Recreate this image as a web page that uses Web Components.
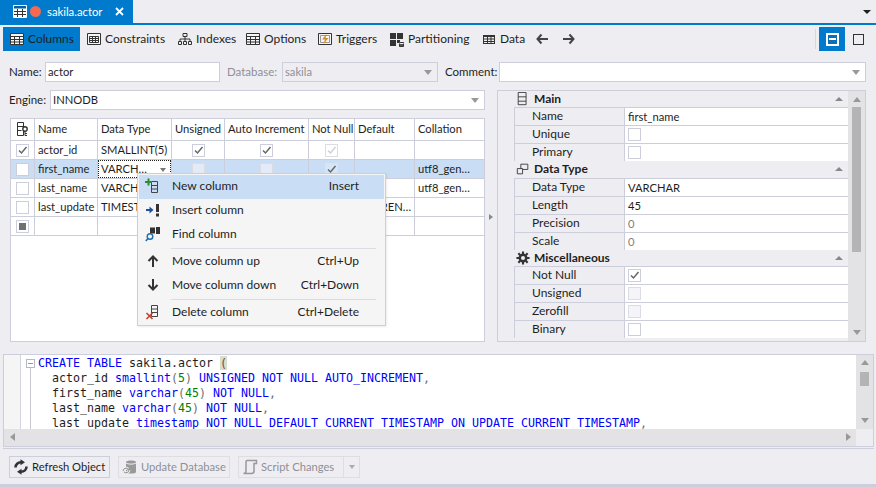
<!DOCTYPE html>
<html>
<head>
<meta charset="utf-8">
<title>sakila.actor</title>
<style>
    html, body { margin: 0; padding: 0; height: 100%; overflow: hidden; }
    body {
        box-sizing: border-box;
        border-bottom: 3px solid #cccedb;
        background: #eeeef2;
        color: #1e1e1e;
        font: 12px/16px Lato, "Noto Sans", "Liberation Sans", sans-serif;
    }
    .designer {
        display: grid;
        grid-template-columns: 476px 12px 369px;
        grid-template-rows: 20px 252px;
        row-gap: 8px;
        padding: 10px 0 0 9px;
    }
    .top-fields { grid-column: 1 / 4; display: flex; gap: 7px; }
    .left-col { display: flex; flex-direction: column; gap: 8px; }
    .splitter { display: flex; align-items: center; justify-content: center; padding-top: 2px; }
    .splitter i { border-left: 4px solid #888; border-top: 3px solid transparent; border-bottom: 3px solid transparent; }
    .num { color: #808080; }
</style>
</head>
<body>
<doc-tabs title="sakila.actor"></doc-tabs>
<tool-bar>
    <tool-button icon="table" width="77" active>Columns</tool-button>
    <tool-button icon="constraints" width="91">Constraints</tool-button>
    <tool-button icon="indexes" width="68">Indexes</tool-button>
    <tool-button icon="table" width="72">Options</tool-button>
    <tool-button icon="triggers" width="72">Triggers</tool-button>
    <tool-button icon="partitions" width="92">Partitioning</tool-button>
    <tool-button icon="smalltable" width="53">Data</tool-button>
    <tool-button icon="left" width="27"></tool-button>
    <tool-button icon="right" width="27"></tool-button>
</tool-bar>

<div class="designer">
    <div class="top-fields">
        <form-field label="Name:" label-width="36" width="175">actor</form-field>
        <form-field label="Database:" label-width="55" width="156" arrow disabled>sakila</form-field>
        <form-field label="Comment:" label-width="54" width="367" arrow></form-field>
    </div>
    <div class="left-col">
        <form-field label="Engine:" label-width="41" width="435" arrow>INNODB</form-field>
        <column-grid>
            <grid-row kind="head">
                <grid-cell><svg-icon name="keycol"></svg-icon></grid-cell>
                <grid-cell>Name</grid-cell><grid-cell>Data Type</grid-cell><grid-cell>Unsigned</grid-cell>
                <grid-cell>Auto Increment</grid-cell><grid-cell>Not Null</grid-cell><grid-cell>Default</grid-cell><grid-cell>Collation</grid-cell>
            </grid-row>
            <grid-row>
                <grid-cell center><check-box checked gray></check-box></grid-cell>
                <grid-cell>actor_id</grid-cell><grid-cell>SMALLINT(5)</grid-cell>
                <grid-cell center><check-box checked></check-box></grid-cell>
                <grid-cell center><check-box checked></check-box></grid-cell>
                <grid-cell center><check-box checked faded></check-box></grid-cell>
                <grid-cell></grid-cell><grid-cell></grid-cell>
            </grid-row>
            <grid-row selected>
                <grid-cell center><check-box white></check-box></grid-cell>
                <grid-cell>first_name</grid-cell>
                <grid-cell editor>VARCH…</grid-cell>
                <grid-cell center><check-box faded></check-box></grid-cell>
                <grid-cell center><check-box faded></check-box></grid-cell>
                <grid-cell center><check-box checked plain></check-box></grid-cell>
                <grid-cell></grid-cell><grid-cell>utf8_gen…</grid-cell>
            </grid-row>
            <grid-row>
                <grid-cell center><check-box></check-box></grid-cell>
                <grid-cell>last_name</grid-cell><grid-cell>VARCHAR(45)</grid-cell>
                <grid-cell></grid-cell><grid-cell></grid-cell><grid-cell></grid-cell>
                <grid-cell></grid-cell><grid-cell>utf8_gen…</grid-cell>
            </grid-row>
            <grid-row>
                <grid-cell center><check-box></check-box></grid-cell>
                <grid-cell>last_update</grid-cell><grid-cell>TIMESTAMP</grid-cell>
                <grid-cell></grid-cell><grid-cell></grid-cell><grid-cell></grid-cell>
                <grid-cell>CURREN…</grid-cell><grid-cell></grid-cell>
            </grid-row>
            <grid-row>
                <grid-cell center><check-box stop></check-box></grid-cell>
                <grid-cell></grid-cell><grid-cell></grid-cell><grid-cell></grid-cell><grid-cell></grid-cell>
                <grid-cell></grid-cell><grid-cell></grid-cell><grid-cell></grid-cell>
            </grid-row>
            <context-menu slot="overlay">
                <menu-item icon="newcol" shortcut="Insert" active>New column</menu-item>
                <menu-item icon="insertcol">Insert column</menu-item>
                <menu-item icon="findcol">Find column</menu-item>
                <menu-sep></menu-sep>
                <menu-item icon="up" shortcut="Ctrl+Up">Move column up</menu-item>
                <menu-item icon="down" shortcut="Ctrl+Down">Move column down</menu-item>
                <menu-sep></menu-sep>
                <menu-item icon="delcol" shortcut="Ctrl+Delete">Delete column</menu-item>
            </context-menu>
        </column-grid>
    </div>
    <div class="splitter"><i></i></div>
    <prop-grid>
        <prop-category icon="main" height="16">Main</prop-category>
        <prop-row label="Name">first_name</prop-row>
        <prop-row label="Unique"><check-box></check-box></prop-row>
        <prop-row label="Primary"><check-box></check-box></prop-row>
        <prop-category icon="datatype" height="17" nudge>Data Type</prop-category>
        <prop-row label="Data Type">VARCHAR</prop-row>
        <prop-row label="Length">45</prop-row>
        <prop-row label="Precision"><span class="num">0</span></prop-row>
        <prop-row label="Scale"><span class="num">0</span></prop-row>
        <prop-category icon="gear" height="16">Miscellaneous</prop-category>
        <prop-row label="Not Null"><check-box checked></check-box></prop-row>
        <prop-row label="Unsigned"><check-box faded></check-box></prop-row>
        <prop-row label="Zerofill"><check-box faded></check-box></prop-row>
        <prop-row label="Binary"><check-box></check-box></prop-row>
    </prop-grid>
</div>

<sql-panel></sql-panel>

<action-bar>
    <action-button icon="refresh" width="101">Refresh Object</action-button>
    <action-button icon="updatedb" width="112" disabled>Update Database</action-button>
    <action-button icon="script" width="106" disabled split>Script Changes</action-button>
</action-bar>

<script>
// all icons live here, drawn on a 16x16 box
const ICONS = {
    table: '<path d="M1.5 2.5h13v11h-13z" fill="#f6f6f6" stroke="#333"/><path d="M1.5 5.5h13M1.5 8.500h13M1.5 11h13M5.5 5.5v8M10.5 5.5v8" stroke="#333" fill="none"/>',
    constraints: '<path d="M1.5 2.5h13v11h-13z" fill="#f6f6f6" stroke="#333"/><path d="M3.5 5.5h9v6h-9z" fill="none" stroke="#333"/><path d="M3.5 7.5h9M3.5 9.5h9M6.5 5.5v6M9.5 5.5v6" stroke="#333" fill="none"/>',
    indexes: '<path d="M6 2.5h4v3h-4zM1.5 10.5h3v3h-3zM6.5 10.5h3v3h-3zM11.5 10.5h3v3h-3z" fill="none" stroke="#333"/><path d="M8 5.5v5M3 10.5V8h10v2.5" fill="none" stroke="#333"/>',
    triggers: '<path d="M1.5 2.5h13v11h-13z" fill="#f6f6f6" stroke="#333"/><path d="M3.5 4.500h9v7h-9z" fill="none" stroke="#999"/><path d="M9.5 3L5 8.500h3L6.500 13l5-6H8.500z" fill="#d98a1c"/>',
    partitions: '<path d="M1 2h6v6H1zM8 2h6v6H8zM1 9h6v6H1z" fill="#333"/><path d="M8 9h3v3H8z" fill="#333"/><path d="M10 11h5v5h-5z" fill="#eeeef2"/><path d="M10.5 11.5h4v4h-4z" fill="#555" stroke="#333"/><path d="M10.5 12.5h4" stroke="#eee"/>',
    smalltable: '<path d="M2 4h12v9H2z" fill="#333"/><path d="M3 6h3v1.5H3zM7 6h2.5v1.5H7zM10.5 6h2.5v1.5h-2.5zM3 8.5h3V10H3zM7 8.5h2.5V10H7zM10.5 8.5h2.5V10h-2.5zM3 11h3v1H3zM7 11h2.5v1H7zM10.5 11h2.5v1h-2.5z" fill="#f0f0f0"/>',
    left: '<path d="M7.5 3.5L3.5 8l4 4.500M4 8h10" fill="none" stroke="#444" stroke-width="2"/>',
    right: '<path d="M8.5 3.5L12.500 8l-4 4.500M12 8H2" fill="none" stroke="#444" stroke-width="2"/>',
    keycol: '<path d="M3.5 1.5h6v13h-6zM3.5 5.5h6M3.5 9.5h4" fill="none" stroke="#333"/><circle cx="11" cy="8" r="2.2" fill="#fff" stroke="#333" stroke-width="1.4"/><path d="M11 10v4.5M11 12.5h2M11 14.5h2" stroke="#333" fill="none"/>',
    newcol: '<path d="M6.5 3.5h6v11h-6zM6.500 7.500h6M6.500 11h6" fill="none" stroke="#444"/><path d="M0 3h7v2H0zM2.5 0.5h2v7h-2z" fill="#2e8b2e"/>',
    insertcol: '<path d="M1 8h4" stroke="#1c4f9c" stroke-width="2"/><path d="M4.500 4.500L8.500 8l-4 3.500z" fill="#1c4f9c"/><path d="M11 2h3v8h-3zM11 11.500h3v3h-3z" fill="#333"/>',
    findcol: '<path d="M5 1.500h5v6H5zM11 1h4v7h-4z" fill="#333"/><circle cx="5" cy="10.500" r="2.800" fill="#f5f5f5" stroke="#1c6fb5" stroke-width="1.400"/><path d="M3 12.500L.8 15" stroke="#1c6fb5" stroke-width="1.600"/>',
    up: '<path d="M3.5 8L8 3.500 12.500 8M8 4v10" fill="none" stroke="#333" stroke-width="2"/>',
    down: '<path d="M3.5 8L8 12.500 12.500 8M8 12V2" fill="none" stroke="#333" stroke-width="2"/>',
    delcol: '<path d="M6.5 1.5h6v11h-6zM6.500 5h6M6.500 8.500h6" fill="none" stroke="#444"/><path d="M1.500 9l6 6M7.500 9l-6 6" stroke="#c8402a" stroke-width="1.600"/>',
    main: '<path d="M2.500 .5h9v14h-9zM2.500 5.500h9M2.500 10.500h9" fill="none" stroke="#333"/>',
    datatype: '<path d="M5.500 2.500h8v6h-8z" fill="none" stroke="#333"/><path d="M1.500 7.500h6v6h-6z" fill="#eeeef2" stroke="#333"/>',
    gear: '<circle cx="8" cy="8" r="3.700" fill="none" stroke="#333" stroke-width="2.800"/><path d="M8 .5v3M8 12.500v3M.5 8h3M12.500 8h3M2.700 2.700l2.100 2.100M11.200 11.200l2.100 2.100M13.300 2.700l-2.100 2.100M4.800 11.200l-2.100 2.100" stroke="#333" stroke-width="2.400"/>',
    refresh: '<path d="M2.500 8.500C2.500 5.500 5 3.300 8 3.300M13.500 7.500c0 3-2.500 5.200-5.500 5.200" fill="none" stroke="#333" stroke-width="2.600"/><path d="M7.500 .3l4.500 3-4.500 3zM8.500 15.700L4 12.700l4.500-3z" fill="#333"/>',
    updatedb: '<path d="M4 3c0-2 10-2 10 0v10c0 2-10 2-10 0z" fill="#999"/><path d="M4 4c1.500 1.500 8.500 1.500 10 0" fill="none" stroke="#eee"/><path d="M1 12a3 3 0 0 1 5-2M7 11a3 3 0 0 1-5 2" fill="none" stroke="#eee" stroke-width="3"/><path d="M1 12a3 3 0 0 1 5-2M7 11a3 3 0 0 1-5 2" fill="none" stroke="#888"/>',
    script: '<path d="M5 1.500h9.500v3H12V12c0 1.500-1 2.500-2.500 2.500H1.500C3 14.500 4 13.500 4 12V3c0-.8.300-1.500 1-1.500z" fill="#eeeef2" stroke="#999" stroke-width="1.500"/>'
};

// tiny helper so every class does not repeat the same three lines
class ShadowEl extends HTMLElement {
    constructor() {
        super();
        this.attachShadow({ mode: 'open' });
    }
    render(html) {
        this.shadowRoot.innerHTML = html;
    }
}

class SvgIcon extends ShadowEl {
    connectedCallback() {
        const size = this.getAttribute('size') || 16;
        this.render(`<style>:host { display: inline-flex; flex: none; } svg { display: block; }</style>
            <svg width="${size}" height="${size}" viewBox="0 0 16 16">${ICONS[this.getAttribute('name')] || ''}</svg>`);
    }
}
customElements.define('svg-icon', SvgIcon);

class DocTabs extends ShadowEl {
    connectedCallback() {
        this.render(`<style>
            :host { display: flex; height: 25px; box-sizing: border-box; border-bottom: 2px solid #007acc; }
            .tab { width: 133px; flex: none; background: #007acc; color: #fff; display: flex; align-items: center; padding-left: 13px; box-sizing: border-box; }
            .sq { display: flex; flex: none; }
            .dot { flex: none; width: 11px; height: 11px; border-radius: 50%; background: #f4694f; margin: 0 6px 0 3px; }
            .title { flex: none; width: 68px; white-space: nowrap; font-size: 11.300px; }
            .close { display: flex; flex: none; }
            .more { margin-left: auto; margin-right: 5px; align-self: center; border: 4px solid transparent; border-top: 4px solid #1e1e1e; border-bottom: 0; margin-top: 1px; }
        </style>
        <div class="tab">
            <span class="sq"><svg width="14" height="13" viewBox="0 0 14 13"><path d="M.5.5h13v12H.5z" fill="#0a5f9e" stroke="#fff"/><path d="M1 3.500h12V12H1z" fill="#fff"/><path d="M1 6.500h12M1 9.500h12M4.500 4v8M9.500 4v8" stroke="#333"/></svg></span>
            <span class="dot"></span>
            <span class="title">${this.getAttribute('title')}</span>
            <span class="close"><svg width="9" height="9" viewBox="0 0 9 9"><path d="M1 1l7 7M8 1L1 8" stroke="#fff" stroke-width="1.800"/></svg></span>
        </div>
        <span class="more"></span>`);
    }
}
customElements.define('doc-tabs', DocTabs);

class ToolBar extends ShadowEl {
    connectedCallback() {
        this.render(`<style>
            :host { display: flex; height: 27px; align-items: flex-start; padding: 2px 0 0 3px; box-sizing: border-box; }
            .right { margin-left: auto; display: flex; align-items: center; height: 24px; margin-right: 12px; }
            .bar { width: 1px; height: 20px; background: #d6d6de; margin-right: 3px; }
            .on { width: 26px; height: 24px; background: #007acc; display: flex; align-items: center; justify-content: center; }
            .on b { display: block; width: 9px; height: 9px; border: 1px solid #fff; outline: 1px solid #fff; position: relative; background: #0a6fb8; }
            .on b::after { content: ""; position: absolute; left: 1px; right: 1px; top: 3px; height: 2px; background: #fff; }
            .off { width: 9px; height: 9px; border: 1px solid #333; margin-left: 8px; }
        </style>
        <slot></slot>
        <div class="right"><span class="bar"></span><span class="on"><b></b></span><span class="off"></span></div>`);
    }
}
customElements.define('tool-bar', ToolBar);

class ToolButton extends ShadowEl {
    connectedCallback() {
        const active = this.hasAttribute('active');
        this.render(`<style>
            :host { display: flex; flex: none; align-items: center; gap: 3px; height: 24px; width: ${this.getAttribute('width')}px; padding-left: 6px; box-sizing: border-box; white-space: nowrap; background: ${active ? '#007acc' : 'none'}; }
        </style>
        <svg-icon name="${this.getAttribute('icon')}"></svg-icon><slot></slot>`);
    }
}
customElements.define('tool-button', ToolButton);

class FormField extends ShadowEl {
    connectedCallback() {
        const disabled = this.hasAttribute('disabled');
        this.render(`<style>
            :host { display: flex; align-items: center; height: 20px; flex: none; color: ${disabled ? '#8f8f96' : '#1e1e1e'}; }
            .label { width: ${this.getAttribute('label-width')}px; white-space: nowrap; font-size: 11.500px; }
            .box { width: ${this.getAttribute('width')}px; height: 20px; box-sizing: border-box; border: 1px solid #cccedb; background: ${disabled ? '#eeeef2' : '#fff'}; display: flex; align-items: center; padding: 0 2px; position: relative; font-size: 11.200px; }
            .arrow { position: absolute; right: 5px; top: 7px; border: 4px solid transparent; border-top: 5px solid #999; border-bottom: 0; }
        </style>
        <span class="label">${this.getAttribute('label')}</span>
        <div class="box"><slot></slot>${this.hasAttribute('arrow') ? '<i class="arrow"></i>' : ''}</div>`);
    }
}
customElements.define('form-field', FormField);

class CheckBox extends ShadowEl {
    connectedCallback() {
        const faded = this.hasAttribute('faded');
        const plain = this.hasAttribute('plain');
        const border = plain ? '#d5e3f4' : faded ? '#dcdce4' : '#cccedb';
        const tick = faded ? '#cfcfd6' : '#666';
        let bg = this.hasAttribute('white') ? '#fff' : 'transparent';
        if (faded && !this.hasAttribute('checked')) bg = 'rgba(240,240,246,.7)';
        if (plain) bg = 'rgba(255,255,255,.25)';
        let mark = '';
        if (this.hasAttribute('checked')) {
            mark = `<svg width="11" height="11" viewBox="0 0 11 11"><path d="M2 5.500l2.500 2.500L9.500 2" fill="none" stroke="${tick}" stroke-width="1.500"/></svg>`;
        }
        if (this.hasAttribute('stop')) {
            mark = '<span class="stop"></span>';
        }
        this.render(`<style>
            :host { display: inline-flex; width: 13px; height: 13px; box-sizing: border-box; border: 1px solid ${border}; background: ${bg}; align-items: center; justify-content: center; }
            .stop { width: 7px; height: 7px; background: #707070; }
            svg { display: block; }
        </style>${mark}`);
    }
}
customElements.define('check-box', CheckBox);

class ColumnGrid extends ShadowEl {
    connectedCallback() {
        this.render(`<style>
            :host { display: block; position: relative; width: 475px; margin-left: 1px; height: 224px; box-sizing: border-box; border: 1px solid #cccedb; background: #fff; --cols: 24px 63px 74px 53px 84px 46px 60px 69px; }
        </style><slot></slot><slot name="overlay"></slot>`);
    }
}
customElements.define('column-grid', ColumnGrid);

class GridRow extends ShadowEl {
    connectedCallback() {
        const head = this.getAttribute('kind') === 'head';
        this.render(`<style>
            :host { display: grid; grid-template-columns: var(--cols); height: ${head ? 22 : 19}px; background: ${this.hasAttribute('selected') ? '#c9def5' : 'none'}; box-sizing: border-box; --head-pad: ${head ? 2 : 0}px; }
        </style><slot></slot>`);
    }
}
customElements.define('grid-row', GridRow);

class GridCell extends ShadowEl {
    connectedCallback() {
        const center = this.hasAttribute('center');
        const editor = this.hasAttribute('editor');
        this.render(`<style>
            :host { display: flex; align-items: center; box-sizing: border-box; overflow: hidden; white-space: nowrap; border-right: 1px solid #cccedb; border-bottom: 1px solid #cccedb; padding-left: 3px; padding-bottom: var(--head-pad, 0); position: relative; font-size: 11.200px; ${center ? 'justify-content: center; padding-left: 0;' : ''} }
            :host(:last-child) { border-right: 0; }
            .ed { position: absolute; inset: 0; background: #fff; border: 1px dotted #222; padding-left: 2px; display: flex; align-items: center; box-sizing: border-box; }
            .ed i { position: absolute; right: 4px; top: 7px; border: 3.500px solid transparent; border-top: 4px solid #777; border-bottom: 0; }
        </style>${editor ? '<div class="ed"><slot></slot><i></i></div>' : '<slot></slot>'}`);
    }
}
customElements.define('grid-cell', GridCell);

class ContextMenu extends ShadowEl {
    connectedCallback() {
        this.render(`<style>
            :host { position: absolute; left: 126px; top: 54px; width: 249px; height: 153px; box-sizing: border-box; border: 1px solid #cccedb; background: #f5f5f5; padding: 1px; display: block; box-shadow: 1px 1px 2px rgba(0,0,0,.08); }
        </style><slot></slot>`);
    }
}
customElements.define('context-menu', ContextMenu);

class MenuItem extends ShadowEl {
    connectedCallback() {
        this.render(`<style>
            :host { display: flex; align-items: center; height: 24px; box-sizing: border-box; padding: 0 0 2px 6px; background: ${this.hasAttribute('active') ? '#c9def5' : 'none'}; }
            .text { margin-left: 11px; white-space: nowrap; flex: 1; }
            .key { padding-right: 25px; white-space: nowrap; }
        </style>
        <svg-icon name="${this.getAttribute('icon')}"></svg-icon>
        <span class="text"><slot></slot></span>
        <span class="key">${this.getAttribute('shortcut') || ''}</span>`);
    }
}
customElements.define('menu-item', MenuItem);

class MenuSep extends ShadowEl {
    connectedCallback() {
        this.render(`<style>
            :host { display: block; height: 3px; padding: 1px 0; box-sizing: border-box; margin-left: 32px; margin-right: 8px; }
            div { height: 1px; background: #dcdce2; }
        </style><div></div>`);
    }
}
customElements.define('menu-sep', MenuSep);

class PropGrid extends ShadowEl {
    connectedCallback() {
        this.render(`<style>
            :host { display: flex; width: 369px; height: 252px; box-sizing: border-box; border: 1px solid #cccedb; }
            .list { flex: 1; overflow: hidden; }
            .scroll { width: 17px; background: #e3e3e6; position: relative; display: flex; flex-direction: column; align-items: center; }
            .scroll i { border: 4px solid transparent; }
            .up { border-bottom: 5px solid #999 !important; border-top: 0 !important; margin-top: 6px; }
            .thumb { width: 9px; height: 145px; background: #b4b4b4; margin-top: 5px; }
            .down { border-top: 5px solid #999 !important; border-bottom: 0 !important; position: absolute; bottom: 6px; }
        </style>
        <div class="list"><slot></slot></div>
        <div class="scroll"><i class="up"></i><div class="thumb"></div><i class="down"></i></div>`);
    }
}
customElements.define('prop-grid', PropGrid);

class PropCategory extends ShadowEl {
    connectedCallback() {
        this.render(`<style>
            :host { display: flex; align-items: center; height: ${this.getAttribute('height')}px; font-weight: 700; padding: 0 0 ${this.hasAttribute('nudge') ? 1 : 0}px 18px; box-sizing: border-box; position: relative; }
            .name { margin-left: 4px; }
            i { position: absolute; right: 5px; top: 6px; border: 4px solid transparent; border-bottom: 4px solid #888; border-top: 0; }
        </style>
        <svg-icon name="${this.getAttribute('icon')}" size="14"></svg-icon>
        <span class="name"><slot></slot></span><i></i>`);
    }
}
customElements.define('prop-category', PropCategory);

class PropRow extends ShadowEl {
    connectedCallback() {
        this.render(`<style>
            :host { display: grid; grid-template-columns: 111px 1fr; height: 18px; margin-left: 16px; border-top: 1px solid #cccedb; box-sizing: border-box; }
            .label { padding-left: 17px; border-left: 1px solid #cccedb; border-right: 1px solid #cccedb; line-height: 16px; white-space: nowrap; }
            .value { background: #fff; padding-left: 3px; display: flex; align-items: center; white-space: nowrap; font-size: 11.200px; }
        </style>
        <div class="label">${this.getAttribute('label')}</div>
        <div class="value"><slot></slot></div>`);
    }
}
customElements.define('prop-row', PropRow);

class SqlPanel extends ShadowEl {
    connectedCallback() {
        const kw = s => `<span class="k">${s}</span>`;
        const n = s => `<span class="p">(</span><span class="n">${s}</span><span class="p">)</span>`;
        const c = '<span class="p">,</span>';
        const lines = [
            `${kw('CREATE TABLE')} sakila.actor <span class="brace">(</span>`,
            `  actor_id ${kw('smallint')}${n(5)} ${kw('UNSIGNED NOT NULL AUTO_INCREMENT')}${c}`,
            `  first_name ${kw('varchar')}${n(45)} ${kw('NOT NULL')}${c}`,
            `  last_name ${kw('varchar')}${n(45)} ${kw('NOT NULL')}${c}`,
            `  last_update ${kw('timestamp NOT NULL DEFAULT CURRENT_TIMESTAMP ON UPDATE CURRENT_TIMESTAMP')}${c}`
        ];
        this.render(`<style>
            :host { display: grid; grid-template-columns: 1fr 17px; grid-template-rows: 74px 17px; width: 871px; height: 93px; margin: 12px 0 1px 3px; box-sizing: border-box; border: 1px solid #cccedb; background: #eeeef2; }
            .editor { display: flex; background: #fff; overflow: hidden; min-width: 0; }
            .gutter { width: 16px; flex: none; background: #f5f5f5; border-right: 1px solid #d4d4dc; }
            .fold { width: 17px; flex: none; position: relative; }
            .fold b { position: absolute; left: 5px; top: 4px; width: 7px; height: 7px; border: 1px solid #b8b8c4; background: #fff; }
            .fold b::after { content: ""; position: absolute; left: 1px; right: 1px; top: 3px; height: 1px; background: #999; }
            .fold u { position: absolute; left: 9px; top: 13px; bottom: 0; width: 1px; background: #c8c8d0; }
            pre { margin: 0; font: 11.630px/15px "DejaVu Sans Mono", "Liberation Mono", monospace; color: #1e1e1e; padding-top: 1px; }
            .k { color: #0000ff; }
            .n { color: #008000; }
            .p { color: #707070; }
            .brace { background: #dcdcc8; color: #555; }
            .vs { background: #e3e3e6; position: relative; display: flex; flex-direction: column; align-items: center; }
            .hs { background: #e3e3e6; position: relative; }
            i { position: absolute; border: 4px solid transparent; }
            .vs .u { top: 5px; border-bottom: 5px solid #999; border-top: 0; }
            .vs .d { bottom: 6px; border-top: 5px solid #999; border-bottom: 0; }
            .vs .t { position: absolute; top: 17px; width: 9px; height: 14px; background: #b4b4b4; }
            .hs .l { left: 6px; top: 4px; border-right: 5px solid #999; border-left: 0; }
            .hs .r { right: 5px; top: 4px; border-left: 5px solid #999; border-right: 0; }
        </style>
        <div class="editor">
            <div class="gutter"></div>
            <div class="fold"><b></b><u></u></div>
            <pre>${lines.join('\n')}</pre>
        </div>
        <div class="vs"><i class="u"></i><div class="t"></div><i class="d"></i></div>
        <div class="hs"><i class="l"></i><i class="r"></i></div>
        <div></div>`);
    }
}
customElements.define('sql-panel', SqlPanel);

class ActionBar extends ShadowEl {
    connectedCallback() {
        this.render(`<style>
            :host { display: flex; gap: 8px; align-items: flex-start; width: 871px; margin-left: 3px; height: 36px; box-sizing: border-box; border-top: 1px solid #cccedb; padding: 7px 0 0 6px; }
        </style><slot></slot>`);
    }
}
customElements.define('action-bar', ActionBar);

class ActionButton extends ShadowEl {
    connectedCallback() {
        const disabled = this.hasAttribute('disabled');
        const split = this.hasAttribute('split');
        this.render(`<style>
            :host { display: flex; flex: none; height: 22px; color: ${disabled ? '#8f8f96' : '#1e1e1e'}; white-space: nowrap; font-size: 11.200px; }
            .main { width: ${this.getAttribute('width')}px; height: 22px; box-sizing: border-box; border: 1px solid ${disabled ? '#dddde3' : '#cccedb'}; display: flex; align-items: center; padding-left: 3px; gap: 3px; }
            .drop { width: 16px; height: 22px; box-sizing: border-box; border: 1px solid #dddde3; border-left: 0; display: flex; align-items: center; justify-content: center; }
            .drop i { border: 3.500px solid transparent; border-top: 4px solid #aaa; border-bottom: 0; }
        </style>
        <div class="main"><svg-icon name="${this.getAttribute('icon')}"></svg-icon><slot></slot></div>
        ${split ? '<div class="drop"><i></i></div>' : ''}`);
    }
}
customElements.define('action-button', ActionButton);
</script>
</body>
</html>
